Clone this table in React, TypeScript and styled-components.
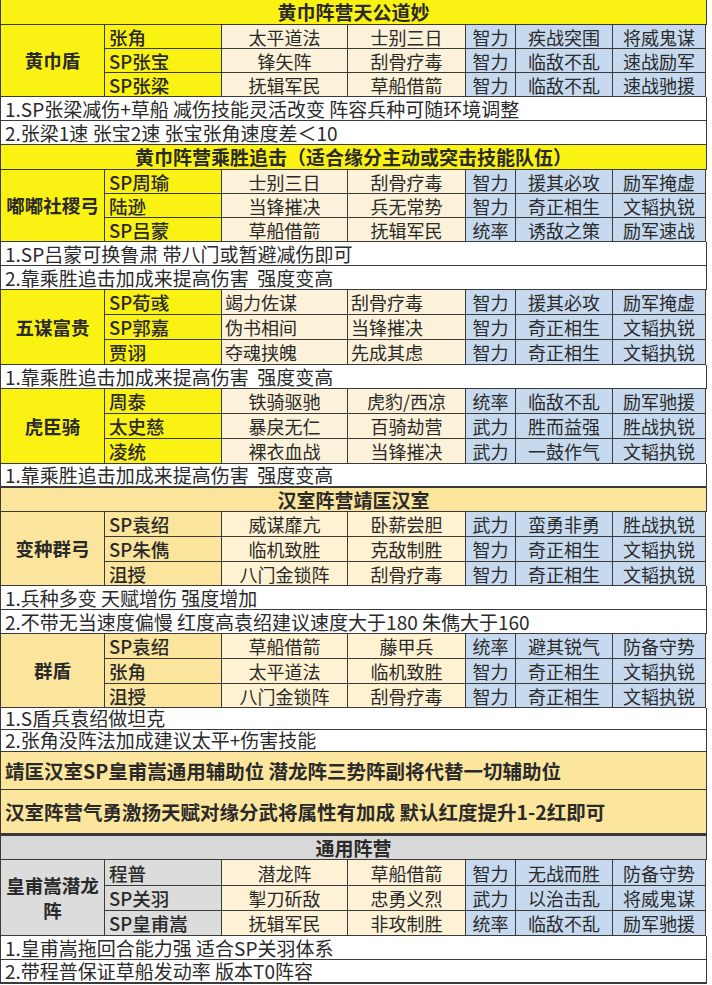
import React from "react";
import styled, { createGlobalStyle, css } from "styled-components";

const GlobalStyle = createGlobalStyle`
  html, body { margin: 0; padding: 0; background: #ffffff; }
  body { font-family: "Noto Sans CJK SC", "Noto Sans", sans-serif; color: #2a2a2a; }
`;

type Tone = "yellow" | "gold" | "grey";

const palette = {
  yellow: { head: "#faf213", team: "#faf213", skill: "#fcf1d9" },
  gold: { head: "#fbe49c", team: "#fbe49c", skill: "#fef2d2" },
  grey: { head: "#d9d9d9", team: "#dcdcdc", skill: "#fdf1d6" },
};

const BLUE = "#c7d9ee";
const LINE = "#3a3a3a";

const COLS = "104px 117px 126px 118px 50px 97px 93px";

const Sheet = styled.div`
  width: 706px;
  display: flex;
  flex-direction: column;
  border-left: 1px solid ${LINE};
`;

const cellBase = css`
  box-sizing: border-box;
  border-right: 1px solid ${LINE};
  border-bottom: 1px solid ${LINE};
  display: flex;
  align-items: center;
  white-space: nowrap;
  line-height: 20px;
  min-width: 0;
`;

const CampHeader = styled.div<{ $tone: Tone; $h: number; $thick?: number }>`
  ${cellBase};
  height: ${(p) => p.$h}px;
  background: ${(p) => palette[p.$tone].head};
  justify-content: center;
  font-size: 19px;
  font-weight: 700;
  border-bottom-width: ${(p) => p.$thick ?? 1}px;
`;

const TeamGrid = styled.div<{ $rows: string }>`
  display: grid;
  grid-template-columns: ${COLS};
  grid-template-rows: ${(p) => p.$rows};
`;

const TeamName = styled.div<{ $tone: Tone }>`
  ${cellBase};
  grid-row: span 3;
  background: ${(p) => palette[p.$tone].team};
  justify-content: center;
  text-align: center;
  white-space: normal;
  font-size: 18.5px;
  font-weight: 700;
  line-height: 1.3;
  padding: 0 2px;
`;

const HeroName = styled.div<{ $tone: Tone }>`
  ${cellBase};
  background: ${(p) => palette[p.$tone].team};
  justify-content: flex-start;
  padding-left: 4px;
  font-size: 18.5px;
  font-weight: 500;
`;

const Skill = styled.div<{ $tone: Tone; $align?: "left" | "center" }>`
  ${cellBase};
  background: ${(p) => palette[p.$tone].skill};
  justify-content: ${(p) => (p.$align === "left" ? "flex-start" : "center")};
  padding-left: ${(p) => (p.$align === "left" ? "3px" : "0")};
  font-size: 18px;
`;

const Attr = styled.div`
  ${cellBase};
  background: ${BLUE};
  justify-content: center;
  font-size: 18px;
`;

const Note = styled.div<{ $h: number; $thick?: number }>`
  ${cellBase};
  height: ${(p) => p.$h}px;
  background: #ffffff;
  align-items: flex-end;
  padding: 0 0 1px 4px;
  font-size: 19px;
  border-bottom-width: ${(p) => p.$thick ?? 1}px;
`;

const Banner = styled.div<{ $h: number; $thick?: number }>`
  ${cellBase};
  height: ${(p) => p.$h}px;
  background: #fce69e;
  padding-left: 4px;
  font-size: 19.5px;
  font-weight: 700;
  border-bottom-width: ${(p) => p.$thick ?? 1}px;
`;

type Hero = [string, string, string, string, string, string];

interface TeamProps {
  tone: Tone;
  name: string;
  heroes: Hero[];
  rows: string;
  align3?: "left" | "center";
  align4?: "left" | "center";
}

const Team: React.FC<TeamProps> = ({ tone, name, heroes, rows, align3, align4 }) => (
  <TeamGrid $rows={rows}>
    <TeamName $tone={tone}>{name}</TeamName>
    {heroes.map((h, i) => (
      <React.Fragment key={i}>
        <HeroName $tone={tone}>{h[0]}</HeroName>
        <Skill $tone={tone} $align={align3}>{h[1]}</Skill>
        <Skill $tone={tone} $align={align4}>{h[2]}</Skill>
        <Attr>{h[3]}</Attr>
        <Attr>{h[4]}</Attr>
        <Attr>{h[5]}</Attr>
      </React.Fragment>
    ))}
  </TeamGrid>
);

export default function App() {
  return (
    <>
      <GlobalStyle />
      <Sheet>
        <CampHeader $tone="yellow" $h={25}>黄巾阵营天公道妙</CampHeader>
        <Team
          tone="yellow"
          name="黄巾盾"
          rows="24px 24px 24px"
          heroes={[
            ["张角", "太平道法", "士别三日", "智力", "疾战突围", "将威鬼谋"],
            ["SP张宝", "锋矢阵", "刮骨疗毒", "智力", "临敌不乱", "速战励军"],
            ["SP张梁", "抚辑军民", "草船借箭", "智力", "临敌不乱", "速战驰援"],
          ]}
        />
        <Note $h={24}>1.SP张梁减伤+草船 减伤技能灵活改变 阵容兵种可随环境调整</Note>
        <Note $h={24}>2.张梁1速 张宝2速 张宝张角速度差＜10</Note>

        <CampHeader $tone="yellow" $h={25}>黄巾阵营乘胜追击（适合缘分主动或突击技能队伍）</CampHeader>
        <Team
          tone="yellow"
          name="嘟嘟社稷弓"
          rows="24px 24px 24px"
          heroes={[
            ["SP周瑜", "士别三日", "刮骨疗毒", "智力", "援其必攻", "励军掩虚"],
            ["陆逊", "当锋摧决", "兵无常势", "智力", "奇正相生", "文韬执锐"],
            ["SP吕蒙", "草船借箭", "抚辑军民", "统率", "诱敌之策", "励军速战"],
          ]}
        />
        <Note $h={24}>1.SP吕蒙可换鲁肃 带八门或暂避减伤即可</Note>
        <Note $h={24}>2.靠乘胜追击加成来提高伤害&nbsp;&nbsp;强度变高</Note>

        <Team
          tone="yellow"
          name="五谋富贵"
          rows="25px 25px 25px"
          align3="left"
          align4="left"
          heroes={[
            ["SP荀彧", "竭力佐谋", "刮骨疗毒", "智力", "援其必攻", "励军掩虚"],
            ["SP郭嘉", "伪书相间", "当锋摧决", "智力", "奇正相生", "文韬执锐"],
            ["贾诩", "夺魂挟魄", "先成其虑", "智力", "奇正相生", "文韬执锐"],
          ]}
        />
        <Note $h={24}>1.靠乘胜追击加成来提高伤害&nbsp;&nbsp;强度变高</Note>

        <Team
          tone="yellow"
          name="虎臣骑"
          rows="25px 25px 25px"
          heroes={[
            ["周泰", "铁骑驱驰", "虎豹/西凉", "统率", "临敌不乱", "励军驰援"],
            ["太史慈", "暴戾无仁", "百骑劫营", "武力", "胜而益强", "胜战执锐"],
            ["凌统", "裸衣血战", "当锋摧决", "武力", "一鼓作气", "文韬执锐"],
          ]}
        />
        <Note $h={24} $thick={2}>1.靠乘胜追击加成来提高伤害&nbsp;&nbsp;强度变高</Note>

        <CampHeader $tone="gold" $h={24}>汉室阵营靖匡汉室</CampHeader>
        <Team
          tone="gold"
          name="变种群弓"
          rows="25px 25px 24px"
          heroes={[
            ["SP袁绍", "威谋靡亢", "卧薪尝胆", "武力", "蛮勇非勇", "胜战执锐"],
            ["SP朱儁", "临机致胜", "克敌制胜", "智力", "奇正相生", "文韬执锐"],
            ["沮授", "八门金锁阵", "刮骨疗毒", "智力", "奇正相生", "文韬执锐"],
          ]}
        />
        <Note $h={24}>1.兵种多变 天赋增伤 强度增加</Note>
        <Note $h={24}>2.不带无当速度偏慢 红度高袁绍建议速度大于180 朱儁大于160</Note>

        <Team
          tone="gold"
          name="群盾"
          rows="25px 25px 24px"
          heroes={[
            ["SP袁绍", "草船借箭", "藤甲兵", "统率", "避其锐气", "防备守势"],
            ["张角", "太平道法", "临机致胜", "智力", "奇正相生", "文韬执锐"],
            ["沮授", "八门金锁阵", "刮骨疗毒", "智力", "奇正相生", "文韬执锐"],
          ]}
        />
        <Note $h={22}>1.S盾兵袁绍做坦克</Note>
        <Note $h={22}>2.张角没阵法加成建议太平+伤害技能</Note>

        <Banner $h={38}>靖匡汉室SP皇甫嵩通用辅助位 潜龙阵三势阵副将代替一切辅助位</Banner>
        <Banner $h={46} $thick={3}>汉室阵营气勇激扬天赋对缘分武将属性有加成 默认红度提升1-2红即可</Banner>

        <CampHeader $tone="grey" $h={24}>通用阵营</CampHeader>
        <Team
          tone="grey"
          name="皇甫嵩潜龙阵"
          rows="26px 25px 25px"
          heroes={[
            ["程普", "潜龙阵", "草船借箭", "智力", "无战而胜", "防备守势"],
            ["SP关羽", "掣刀斫敌", "忠勇义烈", "武力", "以治击乱", "将威鬼谋"],
            ["SP皇甫嵩", "抚辑军民", "非攻制胜", "统率", "临敌不乱", "励军驰援"],
          ]}
        />
        <Note $h={24}>1.皇甫嵩拖回合能力强 适合SP关羽体系</Note>
        <Note $h={24} $thick={2}>2.带程普保证草船发动率 版本T0阵容</Note>
      </Sheet>
    </>
  );
}
